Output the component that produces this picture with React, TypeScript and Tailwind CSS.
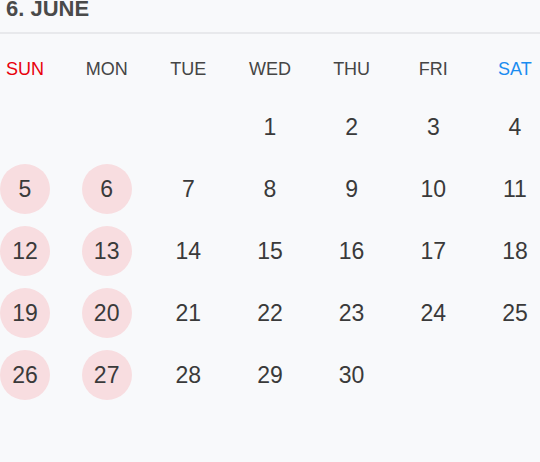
const WEEKDAYS = [
  { label: "SUN", color: "text-[#e8000b]" },
  { label: "MON", color: "text-[#454545]" },
  { label: "TUE", color: "text-[#454545]" },
  { label: "WED", color: "text-[#454545]" },
  { label: "THU", color: "text-[#454545]" },
  { label: "FRI", color: "text-[#454545]" },
  { label: "SAT", color: "text-[#1a8cf0]" },
];

// June starts on a Wednesday
const START_OFFSET = 3;
const DAYS_IN_MONTH = 30;

function buildWeeks() {
  const cells: (number | null)[] = [];
  for (let i = 0; i < START_OFFSET; i++) cells.push(null);
  for (let d = 1; d <= DAYS_IN_MONTH; d++) cells.push(d);
  while (cells.length % 7 !== 0) cells.push(null);
  const weeks: (number | null)[][] = [];
  for (let i = 0; i < cells.length; i += 7) weeks.push(cells.slice(i, i + 7));
  return weeks;
}

export default function App() {
  const weeks = buildWeeks();

  return (
    <div className="flex h-[462px] w-[540px] flex-col overflow-hidden bg-[#f8f9fb] font-['Liberation_Sans',Arial,sans-serif]">
      <div className="flex h-[34px] flex-col border-b-2 border-[#e8e9ec]">
        <h2 className="-mt-[2px] pl-[6px] text-[22px] font-bold leading-[22px] text-[#4a4a4a]">
          6. JUNE
        </h2>
      </div>

      <div className="mt-[23px] flex justify-between">
        {WEEKDAYS.map((w) => (
          <div
            key={w.label}
            className={`w-[50px] text-center text-[18px] leading-[24px] ${w.color}`}
          >
            {w.label}
          </div>
        ))}
      </div>

      <div className="mt-[21px] flex flex-col gap-[12px]">
        {weeks.map((week, wi) => (
          <div key={wi} className="flex justify-between">
            {week.map((day, di) => {
              const highlighted = day !== null && di < 2;
              return (
                <div
                  key={di}
                  className={`flex h-[50px] w-[50px] items-center justify-center rounded-full text-[23px] text-[#3a3a3a] ${
                    highlighted ? "bg-[#f8dde0]" : ""
                  }`}
                >
                  {day}
                </div>
              );
            })}
          </div>
        ))}
      </div>
    </div>
  );
}
